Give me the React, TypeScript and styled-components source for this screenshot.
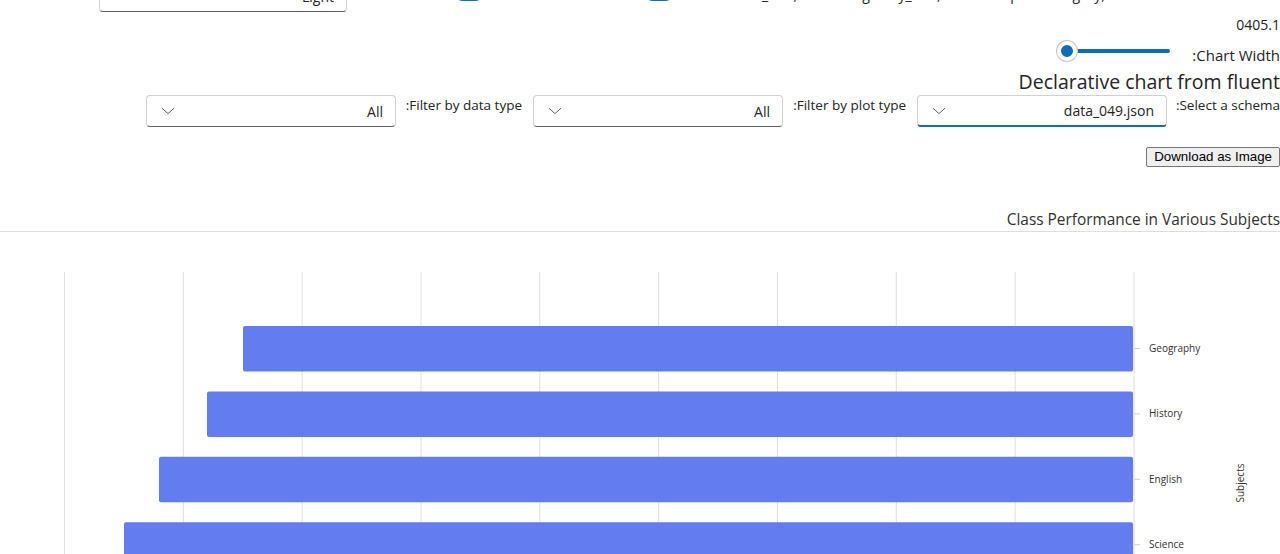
import React from "react";
import styled, { createGlobalStyle } from "styled-components";

const GlobalStyle = createGlobalStyle`
  html, body { margin: 0; padding: 0; background: #ffffff; }
  body {
    font-family: "Segoe UI", "Open Sans", "Noto Sans", sans-serif;
    direction: rtl;
    color: #242424;
    overflow: hidden;
  }
`;

const Page = styled.div`
  margin-top: -20px;
  display: flex;
  flex-direction: column;
`;

const TopRow = styled.div`
  display: flex;
  align-items: flex-start;
  height: 32px;
`;

const SwitchWrap = styled.label<{ $after?: boolean }>`
  display: flex;
  align-items: flex-start;
  gap: 12px;
  margin-right: ${(p) => (p.$after ? 12 : 0)}px;
  font-size: 14px;
  color: #242424;
`;

const SwitchLabel = styled.span<{ $width: number }>`
  width: ${(p) => p.$width}px;
  line-height: 20px;
  margin-top: 5px;
  white-space: nowrap;
  overflow: hidden;
`;

const SwitchTrack = styled.span`
  width: 32px;
  height: 20px;
  border-radius: 10px;
  background: #0f6cbd;
  margin-top: 1px;
  flex: none;
`;

const Version = styled.div`
  font-size: 14px;
  line-height: 20px;
  margin-top: 3px;
  color: #242424;
`;

const WidthRow = styled.div`
  display: flex;
  align-items: center;
  height: 32px;
`;

const WidthLabel = styled.span`
  min-width: 93px;
  font-size: 15px;
  line-height: 20px;
  margin-top: 8px;
  margin-left: 17px;
`;

const SliderBox = styled.div`
  position: relative;
  width: 113px;
  height: 32px;
`;

const SliderRail = styled.div`
  position: absolute;
  left: 10px;
  right: 0;
  top: 14px;
  height: 4px;
  border-radius: 2px;
  background: #0f6cbd;
`;

const SliderThumb = styled.div`
  position: absolute;
  left: 0;
  top: 6px;
  width: 20px;
  height: 20px;
  box-sizing: border-box;
  border-radius: 50%;
  background: #0f6cbd;
  border: 4px solid #ffffff;
  box-shadow: 0 0 0 1px #c7c7c7;
`;

const Heading = styled.h2`
  margin: 1px 0 0;
  font-size: 19.5px;
  line-height: 28px;
  font-weight: 500;
  color: #242424;
`;

const FilterRow = styled.div`
  display: flex;
  align-items: flex-start;
  gap: 11px;
  margin-top: -1px;
`;

const FieldLabel = styled.span<{ $width: number }>`
  width: ${(p) => p.$width}px;
  flex: none;
  font-size: 13.5px;
  line-height: 20px;
  white-space: nowrap;
`;

const Dropdown = styled.div<{ $focused?: boolean; $width?: number }>`
  width: ${(p) => p.$width ?? 250}px;
  height: 32px;
  flex: none;
  box-sizing: border-box;
  border: 1px solid #d1d1d1;
  border-bottom: ${(p) => (p.$focused ? "2px solid #0f6cbd" : "1px solid #616161")};
  border-radius: 4px;
  display: flex;
  align-items: center;
  justify-content: space-between;
  padding: 0 12px 0 11px;
  font-size: 14px;
  color: #242424;
  background: #fff;
`;

const ThemeDropdown = styled(Dropdown)`
  margin-right: auto;
`;

const TopLeftSpacer = styled.div`
  width: 99px;
  flex: none;
`;

const Chevron = () => (
  <svg width="20" height="20" viewBox="0 0 20 20" style={{ flex: "none" }}>
    <path d="M4.2 7.4 L10 12.6 L15.8 7.4" fill="none" stroke="#616161" strokeWidth="1" strokeLinecap="round" strokeLinejoin="round" />
  </svg>
);

const ButtonRow = styled.div`
  display: flex;
  margin-top: 20px;
`;

const DownloadButton = styled.button`
  font-family: "Liberation Sans", Arial, sans-serif;
  font-size: 13.33px;
  line-height: 16px;
  padding: 1px 7px;
  border: 1px solid #767676;
  border-radius: 2px;
  background: #efefef;
  color: #000;
  direction: ltr;
`;

const ChartTitle = styled.div`
  margin-top: 39px;
  height: 26px;
  padding-top: 4px;
  box-sizing: border-box;
  border-bottom: 1px solid #e1dfdd;
  font-size: 15.4px;
  line-height: 20px;
  color: #323130;
`;

const ChartSvg = styled.svg`
  display: block;
  direction: ltr;
  font-family: "Segoe UI", "Open Sans", "Noto Sans", sans-serif;
`;

const subjects = [
  { name: "Geography", x: 243 },
  { name: "History", x: 207 },
  { name: "English", x: 159 },
  { name: "Science", x: 124 },
  { name: "Math", x: 90 },
];

const Chart = () => {
  const top = 40;
  const grid = Array.from({ length: 10 }, (_, i) => 64.5 + i * 118.83);
  return (
    <ChartSvg width={1280} height={360} viewBox="0 0 1280 360">
      {grid.map((x, i) => (
        <line key={i} x1={x} x2={x} y1={top} y2={360} stroke="#e1dfdd" strokeWidth={1} />
      ))}
      {subjects.map((s, i) => {
        const y = 94 + i * 65.4;
        return (
          <g key={s.name}>
            <rect x={s.x} y={y} width={1133 - s.x} height={45.5} rx={2} fill="#637cef" />
            <line x1={1134} x2={1140} y1={y + 22.5} y2={y + 22.5} stroke="#d2d0ce" />
            <text x={1149} y={y + 26} fontSize={10} fill="#323130">
              {s.name}
            </text>
          </g>
        );
      })}
      <text
        x={0}
        y={0}
        fontSize={10}
        fill="#323130"
        textAnchor="middle"
        transform="translate(1244 251) rotate(-90)"
      >
        Subjects
      </text>
    </ChartSvg>
  );
};

export default function App() {
  return (
    <>
      <GlobalStyle />
      <Page>
        <TopRow>
          <SwitchWrap>
            <SwitchLabel $width={593}>
              x_axis, disable legend y_axis, hide tooltip for category, hide on touch zoom mode
            </SwitchLabel>
            <SwitchTrack />
          </SwitchWrap>
          <SwitchWrap $after>
            <SwitchLabel $width={134}>Reset all to default</SwitchLabel>
            <SwitchTrack />
          </SwitchWrap>
          <ThemeDropdown $width={248}>
            <span>Light</span>
            <Chevron />
          </ThemeDropdown>
          <TopLeftSpacer />
        </TopRow>
        <Version>0405.1</Version>
        <WidthRow>
          <WidthLabel>Chart Width:</WidthLabel>
          <SliderBox>
            <SliderRail />
            <SliderThumb />
          </SliderBox>
        </WidthRow>
        <Heading>Declarative chart from fluent</Heading>
        <FilterRow>
          <FieldLabel $width={102}>Select a schema:</FieldLabel>
          <Dropdown $focused>
            <span>data_049.json</span>
            <Chevron />
          </Dropdown>
          <FieldLabel $width={112}>Filter by plot type:</FieldLabel>
          <Dropdown>
            <span>All</span>
            <Chevron />
          </Dropdown>
          <FieldLabel $width={115}>Filter by data type:</FieldLabel>
          <Dropdown>
            <span>All</span>
            <Chevron />
          </Dropdown>
        </FilterRow>
        <ButtonRow>
          <DownloadButton>Download as Image</DownloadButton>
        </ButtonRow>
        <ChartTitle>Class Performance in Various Subjects</ChartTitle>
        <Chart />
      </Page>
    </>
  );
}
